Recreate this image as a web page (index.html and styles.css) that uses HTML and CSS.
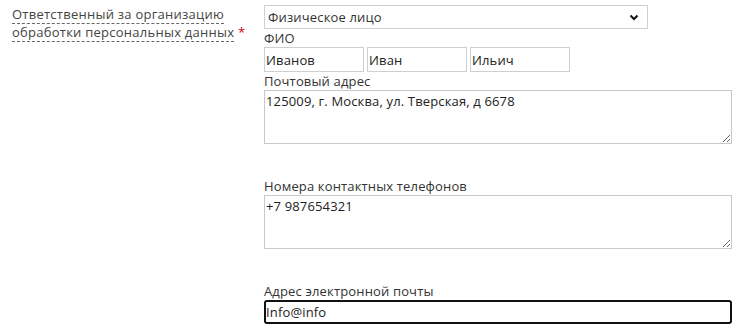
FILE: index.html
```html
<!DOCTYPE html>
<html lang="ru">
<head>
<meta charset="utf-8">
<title>Форма</title>
<link rel="stylesheet" href="styles.css">
</head>
<body>
<div class="row">
  <div class="label-col">
    <span class="hint">Ответственный за организацию обработки персональных данных</span> <span class="req">*</span>
  </div>
  <div class="field-col">
    <div class="select-wrap">
      <select class="select">
        <option>Физическое лицо</option>
      </select>
      <svg class="chev" width="10" height="7" viewBox="0 0 10 7"><path d="M1.5 1.5 L5 5 L8.5 1.5" fill="none" stroke="#111" stroke-width="2"/></svg>
    </div>
    <div class="sub">ФИО</div>
    <div class="fio">
      <input class="inp short" type="text" value="Иванов">
      <input class="inp short" type="text" value="Иван">
      <input class="inp short" type="text" value="Ильич">
    </div>
    <div class="sub">Почтовый адрес</div>
    <textarea class="area">125009, г. Москва, ул. Тверская, д 6678</textarea>
    <div class="sub">Номера контактных телефонов</div>
    <textarea class="area">+7 987654321</textarea>
    <div class="sub">Адрес электронной почты</div>
    <input class="inp email" type="text" value="Info@info">
  </div>
</div>
</body>
</html>
```
FILE: styles.css
```css
html, body {
  margin: 0;
  padding: 0;
  background: #fff;
}
body {
  font-family: "Open Sans", "Liberation Sans", sans-serif;
  font-size: 13px;
  letter-spacing: 0.15px;
  color: #333;
}
.row {
  display: flex;
  align-items: flex-start;
}
.label-col {
  width: 252px;
  padding: 5px 0 0 12px;
  line-height: 18px;
  letter-spacing: 0.25px;
  color: #444;
}
.hint {
  border-bottom: 1px dashed #666;
}
.req {
  color: #d0021b;
}
.field-col {
  display: flex;
  flex-direction: column;
  align-items: flex-start;
  padding-top: 5px;
  width: 468px;
}
.select-wrap {
  position: relative;
  width: 384px;
  height: 24px;
}
.select {
  -webkit-appearance: none;
  appearance: none;
  box-sizing: border-box;
  width: 384px;
  height: 24px;
  margin: 0;
  padding: 0 3px;
  border: 1px solid #d0d0d0;
  border-radius: 0;
  background: #fff;
  font-family: "Open Sans", "Liberation Sans", sans-serif;
  font-size: 13px;
  letter-spacing: 0.15px;
  color: #333;
  outline: none;
}
.chev {
  position: absolute;
  right: 9px;
  top: 9px;
  pointer-events: none;
}
.sub {
  line-height: 18px;
  color: #333;
}
.fio {
  display: flex;
  gap: 3px;
}
.inp {
  box-sizing: border-box;
  margin: 0;
  padding: 0 1px;
  border: 1px solid #cfcfcf;
  border-radius: 0;
  font-family: "Open Sans", "Liberation Sans", sans-serif;
  font-size: 13px;
  letter-spacing: 0.15px;
  color: #222;
  background: #fff;
  outline: none;
}
.short {
  width: 100px;
  height: 25px;
}
.area {
  box-sizing: border-box;
  display: block;
  width: 468px;
  height: 54px;
  margin: 0 0 33px 0;
  padding: 1px;
  border: 1px solid #c8c8c8;
  font-family: "Open Sans", "Liberation Sans", sans-serif;
  font-size: 13px;
  letter-spacing: 0.15px;
  line-height: 18px;
  color: #222;
  resize: both;
  outline: none;
}
.email {
  width: 468px;
  height: 24px;
  border: 2px solid #111;
  border-radius: 3px;
  padding: 0;
  color: #222;
}
```
